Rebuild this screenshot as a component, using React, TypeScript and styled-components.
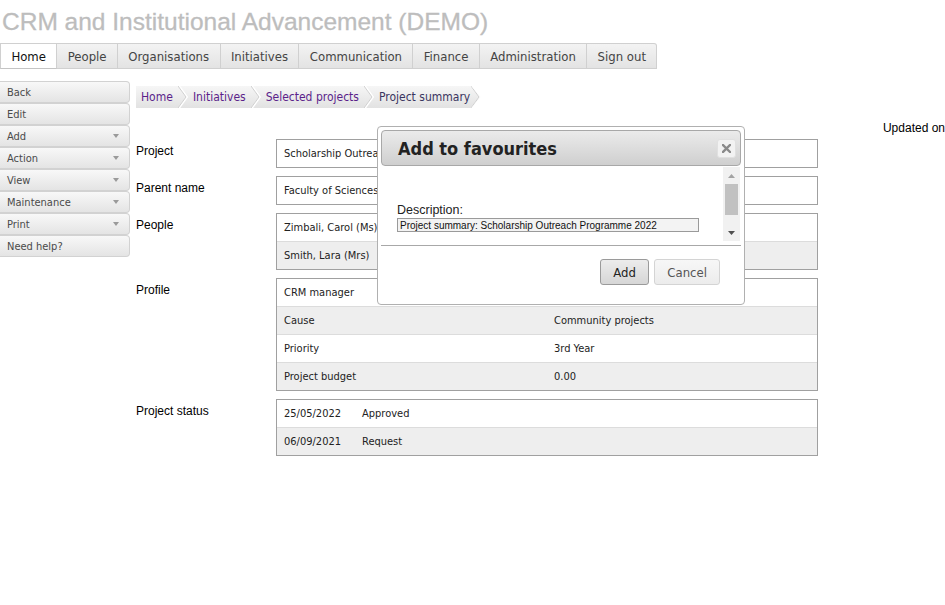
import styled, { createGlobalStyle } from "styled-components";

const GlobalStyle = createGlobalStyle`
  html, body {
    margin: 0;
    padding: 0;
    background: #fff;
  }
  body {
    font-family: "DejaVu Sans Condensed", "DejaVu Sans", sans-serif;
    color: #222;
  }
`;

const ui = `"DejaVu Sans Condensed", "DejaVu Sans", sans-serif`;
const arial = `"Liberation Sans", Arial, sans-serif`;

const tabs = ["Home", "People", "Organisations", "Initiatives", "Communication", "Finance", "Administration", "Sign out"];
const sideItems = [
  { label: "Back", caret: false },
  { label: "Edit", caret: false },
  { label: "Add", caret: true },
  { label: "Action", caret: true },
  { label: "View", caret: true },
  { label: "Maintenance", caret: true },
  { label: "Print", caret: true },
  { label: "Need help?", caret: false },
];
const crumbs = ["Home", "Initiatives", "Selected projects", "Project summary"];

const App = () => {
  return (
    <Page>
      <GlobalStyle />
      <Title>CRM and Institutional Advancement (DEMO)</Title>
      <TabBar>
        {tabs.map((t, i) => (
          <Tab key={t} $active={i === 0} $last={i === tabs.length - 1}>{t}</Tab>
        ))}
      </TabBar>
      <Main>
        <SideMenu>
          {sideItems.map((s) => (
            <SideButton key={s.label}>
              <span>{s.label}</span>
              {s.caret && <Caret />}
            </SideButton>
          ))}
        </SideMenu>
        <Content>
          <Breadcrumb>
            {crumbs.map((c, i) => (
              <Crumb key={c} $current={i === crumbs.length - 1}>
                <span>{c}</span>
                <svg width="10" height="22" viewBox="0 0 10 22">
                  <path d="M1 0 L9 11 L1 22" fill="none" stroke="#fff" strokeWidth="2" />
                  <path d="M0 0 L8 11 L0 22" fill="none" stroke="#cfcfcf" strokeWidth="1" />
                </svg>
              </Crumb>
            ))}
          </Breadcrumb>
          <UpdatedLine>Updated on</UpdatedLine>
          <Form>
            <FieldLabel>Project</FieldLabel>
            <DataBox>
              <DataRow $cols="1fr">
                <span>Scholarship Outreach Programme 2022</span>
              </DataRow>
            </DataBox>

            <FieldLabel>Parent name</FieldLabel>
            <DataBox>
              <DataRow $cols="1fr">
                <span>Faculty of Sciences</span>
              </DataRow>
            </DataBox>

            <FieldLabel>People</FieldLabel>
            <DataBox>
              <DataRow $cols="1fr">
                <span>Zimbali, Carol (Ms)</span>
              </DataRow>
              <DataRow $cols="1fr" $alt>
                <span>Smith, Lara (Mrs)</span>
              </DataRow>
            </DataBox>

            <FieldLabel>Profile</FieldLabel>
            <DataBox>
              <DataRow $cols="270px 1fr">
                <span>CRM manager</span>
                <span></span>
              </DataRow>
              <DataRow $cols="270px 1fr" $alt>
                <span>Cause</span>
                <span>Community projects</span>
              </DataRow>
              <DataRow $cols="270px 1fr">
                <span>Priority</span>
                <span>3rd Year</span>
              </DataRow>
              <DataRow $cols="270px 1fr" $alt>
                <span>Project budget</span>
                <span>0.00</span>
              </DataRow>
            </DataBox>

            <FieldLabel>Project status</FieldLabel>
            <DataBox>
              <DataRow $cols="78px 1fr">
                <span>25/05/2022</span>
                <span>Approved</span>
              </DataRow>
              <DataRow $cols="78px 1fr" $alt>
                <span>06/09/2021</span>
                <span>Request</span>
              </DataRow>
            </DataBox>
          </Form>
        </Content>
      </Main>

      <Dialog>
        <DialogHeader>
          <DialogTitle>Add to favourites</DialogTitle>
          <CloseButton aria-label="close">
            <svg width="9" height="9" viewBox="0 0 9 9">
              <path d="M1 1 L8 8 M8 1 L1 8" stroke="#8a8a8a" strokeWidth="2.4" strokeLinecap="square" />
            </svg>
          </CloseButton>
        </DialogHeader>
        <DialogBody>
          <DialogScroll>
            <DescLabel>Description:</DescLabel>
            <DescInput defaultValue="Project summary: Scholarship Outreach Programme 2022" />
          </DialogScroll>
          <ScrollBar>
            <ScrollArrow>
              <svg width="7" height="4" viewBox="0 0 7 4"><path d="M0 4 L3.5 0 L7 4 Z" fill="#a3a3a3" /></svg>
            </ScrollArrow>
            <ScrollThumb />
            <ScrollTrack />
            <ScrollArrow>
              <svg width="7" height="4" viewBox="0 0 7 4"><path d="M0 0 L3.5 4 L7 0 Z" fill="#505050" /></svg>
            </ScrollArrow>
          </ScrollBar>
        </DialogBody>
        <DialogFooter>
          <DialogButton $primary>Add</DialogButton>
          <DialogButton>Cancel</DialogButton>
        </DialogFooter>
      </Dialog>
    </Page>
  );
};

const Page = styled.div`
  position: relative;
  width: 945px;
  min-height: 605px;
  overflow: hidden;
`;

const Title = styled.h1`
  margin: 0 0 7px 2px;
  padding-top: 8px;
  font-family: ${arial};
  font-weight: normal;
  font-size: 24.5px;
  line-height: 28px;
  color: #bdbdbd;
  white-space: nowrap;
  -webkit-text-stroke: 0.3px #bdbdbd;
`;

const TabBar = styled.ul`
  display: flex;
  margin: 0;
  padding: 0;
  list-style: none;
`;

const Tab = styled.li<{ $active?: boolean; $last?: boolean }>`
  height: 24px;
  padding: 0 10.4px;
  display: flex;
  align-items: center;
  font-family: ${ui};
  font-size: 13px;
  color: ${(p) => (p.$active ? "#111" : "#444")};
  background: ${(p) => (p.$active ? "#fff" : "linear-gradient(#f3f3f3, #e3e3e3)")};
  border: 1px solid #d0d0d0;
  border-left: ${(p) => (p.$active ? "1px solid #d0d0d0" : "none")};
  border-top-right-radius: ${(p) => (p.$last ? "3px" : "0")};
  border-bottom-color: ${(p) => (p.$active ? "#c4c4c4" : "#d0d0d0")};
`;

const Main = styled.div`
  display: flex;
  align-items: flex-start;
  margin-top: 12px;
`;

const SideMenu = styled.div`
  width: 130px;
  display: flex;
  flex-direction: column;
  flex: none;
`;

const SideButton = styled.div`
  height: 20px;
  display: flex;
  align-items: center;
  justify-content: space-between;
  padding: 0 10px 0 7px;
  font-family: ${ui};
  font-size: 11px;
  color: #4a4a4a;
  background: linear-gradient(#f8f8f8, #e4e4e4);
  border: 1px solid #d2d2d2;
  border-left: none;
  border-radius: 0 4px 4px 0;
`;

const Caret = styled.span`
  width: 0;
  height: 0;
  border-left: 3.5px solid transparent;
  border-right: 3.5px solid transparent;
  border-top: 4px solid #9a9a9a;
`;

const Content = styled.div`
  flex: 1;
  margin-left: 6px;
  padding-top: 5px;
`;

const Breadcrumb = styled.div`
  display: inline-flex;
  height: 22px;
  background: linear-gradient(#f6f6f6, #e2e2e2);
  clip-path: polygon(0 0, calc(100% - 10px) 0, calc(100% - 1px) 50%, calc(100% - 10px) 100%, 0 100%);
`;

const Crumb = styled.div<{ $current?: boolean }>`
  display: flex;
  align-items: center;
  font-family: ${ui};
  font-size: 12px;
  color: ${(p) => (p.$current ? "#3a3560" : "#5b1f8a")};
  span {
    padding: 0 ${(p) => (p.$current ? "1px" : "5px")} 0 5px;
  }
  svg {
    display: block;
  }
`;

const UpdatedLine = styled.div`
  margin-top: 13px;
  height: 14px;
  font-family: ${arial};
  font-size: 12px;
  line-height: 14px;
  text-align: right;
  color: #000;
  white-space: nowrap;
`;

const Form = styled.div`
  display: grid;
  grid-template-columns: 140px 542px;
  row-gap: 8px;
  margin-top: 4px;
`;

const FieldLabel = styled.div`
  font-family: ${arial};
  font-size: 12px;
  line-height: 14px;
  padding-top: 5px;
  color: #000;
`;

const DataBox = styled.div`
  border: 1px solid #a0a0a0;
  background: #fff;
`;

const DataRow = styled.div<{ $cols: string; $alt?: boolean }>`
  display: grid;
  grid-template-columns: ${(p) => p.$cols};
  align-items: center;
  height: 27px;
  padding-left: 7px;
  font-family: ${ui};
  font-size: 11px;
  color: #222;
  white-space: nowrap;
  overflow: hidden;
  background: ${(p) => (p.$alt ? "#eeeeee" : "#fff")};
  & + & {
    border-top: 1px solid #dcdcdc;
  }
`;

const Dialog = styled.div`
  position: absolute;
  left: 377px;
  top: 126px;
  width: 360px;
  height: 171px;
  padding: 3px;
  background: #fff;
  border: 1px solid #b0b0b0;
  border-radius: 4px;
  display: flex;
  flex-direction: column;
`;

const DialogHeader = styled.div`
  height: 34px;
  flex: none;
  display: flex;
  align-items: center;
  justify-content: space-between;
  padding: 0 4px 0 16px;
  background: linear-gradient(#ebebeb, #cfcfcf);
  border: 1px solid #a8a8a8;
  border-radius: 4px;
`;

const DialogTitle = styled.div`
  font-family: ${ui};
  font-weight: bold;
  font-size: 18px;
  color: #222;
`;

const CloseButton = styled.div`
  width: 17px;
  height: 17px;
  display: flex;
  align-items: center;
  justify-content: center;
  background: #f2f2f2;
  border: 1px solid #e0e0e0;
  border-radius: 3px;
`;

const DialogBody = styled.div`
  display: flex;
  height: 74px;
  margin-top: 1px;
  border-bottom: 1px solid #a8a8a8;
  padding-bottom: 4px;
`;

const DialogScroll = styled.div`
  flex: 1;
  padding: 36px 0 0 16px;
`;

const DescLabel = styled.div`
  font-family: ${arial};
  font-size: 12.5px;
  line-height: 15px;
  color: #222;
`;

const DescInput = styled.input`
  display: block;
  box-sizing: border-box;
  width: 302px;
  height: 14px;
  margin: 0;
  padding: 0 2px;
  font-family: ${arial};
  font-size: 10px;
  color: #111;
  background: #f3f3f3;
  border: 1px solid #9a9a9a;
  outline: none;
`;

const ScrollBar = styled.div`
  width: 17px;
  display: flex;
  flex-direction: column;
  background: #f1f1f1;
  margin-right: 1px;
`;

const ScrollArrow = styled.div`
  height: 17px;
  display: flex;
  align-items: center;
  justify-content: center;
`;

const ScrollThumb = styled.div`
  height: 31px;
  margin: 0 2px;
  background: #c1c1c1;
`;

const ScrollTrack = styled.div`
  flex: 1;
`;

const DialogFooter = styled.div`
  flex: 1;
  display: flex;
  justify-content: flex-end;
  align-items: flex-start;
  gap: 5px;
  padding: 13px 21px 0 0;
`;

const DialogButton = styled.div<{ $primary?: boolean }>`
  height: 24px;
  padding: 0 ${(p) => (p.$primary ? "12.5px" : "12px")};
  display: flex;
  align-items: center;
  font-family: ${ui};
  font-size: 13px;
  color: ${(p) => (p.$primary ? "#222" : "#555")};
  background: ${(p) => (p.$primary ? "linear-gradient(#ececec, #d6d6d6)" : "linear-gradient(#f7f7f7, #ececec)")};
  border: 1px solid ${(p) => (p.$primary ? "#9a9a9a" : "#d4d4d4")};
  border-radius: 3px;
`;

export default App;
